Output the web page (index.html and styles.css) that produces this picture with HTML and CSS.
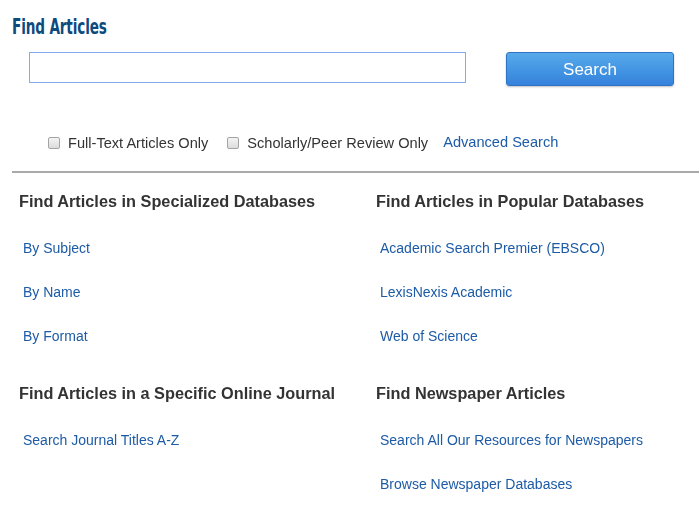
FILE: index.html
```html
<!DOCTYPE html>
<html>
<head>
<meta charset="utf-8">
<link rel="stylesheet" href="styles.css">
</head>
<body>
<div class="page">
  <h1 class="title">Find Articles</h1>
  <form class="search">
    <input class="search-input" type="text" autofocus>
    <button class="search-btn" type="button">Search</button>
  </form>
  <div class="filters">
    <label class="check"><span class="box"></span>Full-Text Articles Only</label>
    <label class="check"><span class="box"></span>Scholarly/Peer Review Only</label>
    <a class="adv" href="#">Advanced Search</a>
  </div>
  <hr class="rule">
  <div class="grid">
    <section class="group">
      <h2 class="group-title">Find Articles in Specialized Databases</h2>
      <a class="link" href="#">By Subject</a>
      <a class="link" href="#">By Name</a>
      <a class="link" href="#">By Format</a>
    </section>
    <section class="group">
      <h2 class="group-title">Find Articles in Popular Databases</h2>
      <a class="link" href="#">Academic Search Premier (EBSCO)</a>
      <a class="link" href="#">LexisNexis Academic</a>
      <a class="link" href="#">Web of Science</a>
    </section>
    <section class="group">
      <h2 class="group-title">Find Articles in a Specific Online Journal</h2>
      <a class="link" href="#">Search Journal Titles A-Z</a>
    </section>
    <section class="group">
      <h2 class="group-title">Find Newspaper Articles</h2>
      <a class="link" href="#">Search All Our Resources for Newspapers</a>
      <a class="link" href="#">Browse Newspaper Databases</a>
    </section>
  </div>
</div>
</body>
</html>
```

FILE: styles.css
```css
html, body { margin: 0; padding: 0; background: #fff; }
body { font-family: "Liberation Sans", Arial, sans-serif; color: #333; }
.page { padding: 14px 0 0 12px; }
.title {
  margin: 0;
  font-family: "DejaVu Sans", sans-serif;
  font-stretch: condensed;
  font-weight: bold;
  font-size: 21px;
  line-height: 26px;
  color: #0d4a7e;
  display: inline-block;
  transform-origin: left center;
  transform: scaleX(0.72);
  letter-spacing: -0.2px;
}
.search { display: flex; align-items: flex-start; margin: 12px 0 0 17px; }
.search-input {
  box-sizing: border-box;
  width: 437px; height: 31px;
  border: 1px solid #84aaf0;
  outline: none;
  padding: 0 0 0 1px;
  font-size: 16px;
  caret-color: #000;
}
.search-btn {
  box-sizing: border-box;
  margin-left: 40px;
  width: 168px; height: 34px;
  border: 1px solid #2f74c4;
  border-radius: 3px;
  background: linear-gradient(#56aaea, #3482dc);
  box-shadow: 0 1px 2px rgba(0,0,0,0.25);
  color: #fff;
  font-family: "Liberation Sans", Arial, sans-serif;
  font-size: 17px;
  padding-top: 2px;
}
.filters { display: flex; align-items: center; margin: 49px 0 0 36px; font-size: 14.6px; }
.check { display: flex; align-items: center; margin-right: 19px; color: #333; }
.box {
  box-sizing: border-box;
  width: 12px; height: 12px;
  border: 1px solid #a4a4a4;
  border-radius: 2px;
  background: linear-gradient(#f4f4f4, #dcdcdc);
  margin-right: 8px;
}
.check + .adv { margin-left: -4px; }
.adv { color: #1d5ba6; text-decoration: none; margin-top: -3px; }
.rule { margin: 20px 0 0 0; border: 0; border-top: 2px solid #a9a9a9; height: 0; }
.grid {
  display: grid;
  grid-template-columns: 357px 1fr;
  padding-left: 7px;
  margin-top: 19px;
}
.group { display: flex; flex-direction: column; margin-bottom: 12px; }
.group-title { margin: 0 0 30px 0; font-size: 16.3px; line-height: 18px; font-weight: bold; color: #333; }
.link { color: #1d5ba6; text-decoration: none; font-size: 14px; line-height: 16px; margin: 0 0 28px 4px; }
```
